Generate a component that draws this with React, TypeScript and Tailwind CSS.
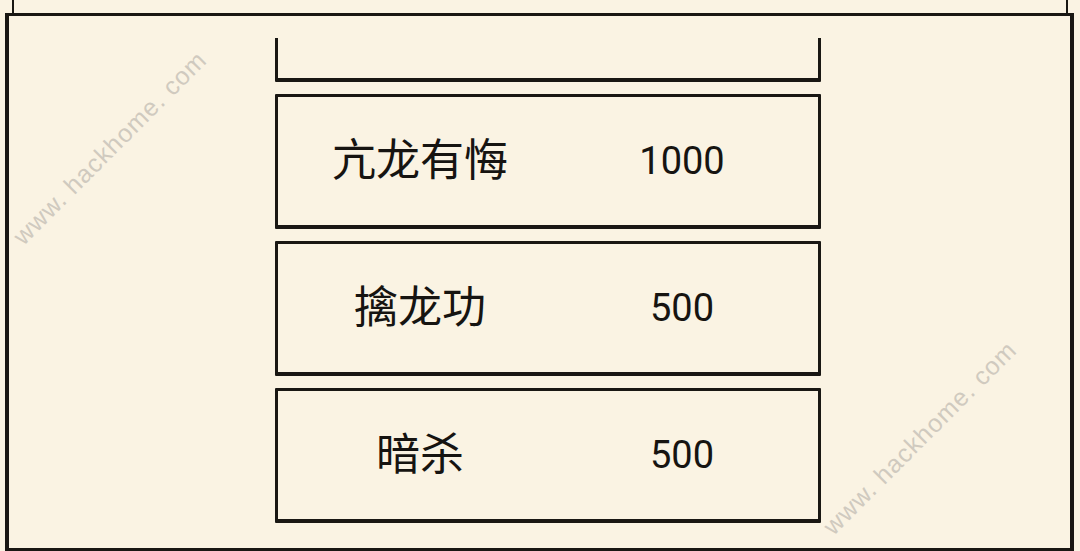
import React from 'react';

type Skill = { name: string; cost: number };

const skills: Skill[] = [
  { name: '亢龙有悔', cost: 1000 },
  { name: '擒龙功', cost: 500 },
  { name: '暗杀', cost: 500 },
];

const ink = 'border-[#191713]';
const rowBox = `h-[135px] shrink-0 border-t-[3px] border-b-[4px] border-x-[3px] ${ink} rounded-[1px]`;

const SkillRow: React.FC<{ skill: Skill }> = ({ skill }) => (
  <div className={`${rowBox} grid grid-cols-[284px_240px] items-center`}>
    <span className="text-center text-[44px] leading-none text-[#161411]">{skill.name}</span>
    <span className="text-center text-[38px] leading-none text-[#161411]">{skill.cost}</span>
  </div>
);

const Watermark: React.FC<{ className: string }> = ({ className }) => (
  <div
    className={`pointer-events-none absolute -translate-x-1/2 -translate-y-1/2 -rotate-45 whitespace-nowrap text-[25px] tracking-[1px] text-[#d0cabf] ${className}`}
    style={{ fontFamily: '"Liberation Sans", Arial, sans-serif' }}
  >
    www. hackhome. com
  </div>
);

export default function App() {
  return (
    <div
      className="relative w-[1080px] h-[551px] overflow-hidden bg-[#faf3e3]"
      style={{ fontFamily: 'Roboto, "Noto Sans CJK SC", sans-serif' }}
    >
      {/* tail of the panel above */}
      <div className={`h-[13px] mx-[12px] border-x-[2px] ${ink}`} />

      {/* shop frame */}
      <div className={`ml-[5px] mr-[6px] h-[538px] border-[4px] border-t-[3px] border-b-[3px] ${ink}`}>
        <div className="ml-[266px] mt-[22px] w-[546px] h-[490px] overflow-hidden">
          <div className="-mt-[91px] flex flex-col gap-[12px]">
            {/* row scrolled mostly out of view */}
            <div className={rowBox} />
            {skills.map((s) => (
              <SkillRow key={s.name} skill={s} />
            ))}
          </div>
        </div>
      </div>

      <Watermark className="left-[110px] top-[148px]" />
      <Watermark className="left-[920px] top-[438px]" />
    </div>
  );
}
